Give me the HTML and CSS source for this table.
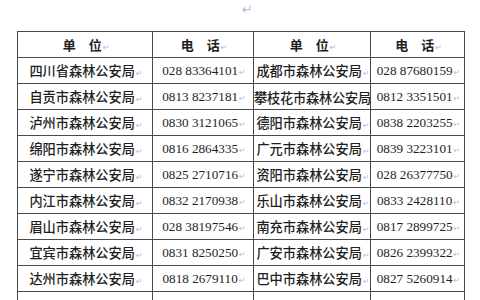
FILE: index.html
```html
<!DOCTYPE html>
<html lang="zh">
<head>
<meta charset="utf-8">
<link rel="stylesheet" href="styles.css">
</head>
<body>
<div class="page">
  <div class="para-mark">↵</div>
  <table class="contacts">
    <colgroup>
      <col class="c1"><col class="c2"><col class="c3"><col class="c4">
    </colgroup>
    <thead>
      <tr>
        <th>单　位<span class="rm">↵</span></th>
        <th>电　话<span class="rm">↵</span></th>
        <th>单　位<span class="rm">↵</span></th>
        <th>电　话<span class="rm">↵</span></th>
      </tr>
    </thead>
    <tbody>
      <tr><td class="name">四川省森林公安局<span class="rm">↵</span></td><td class="tel">028 83364101<span class="rm">↵</span></td><td class="name">成都市森林公安局<span class="rm">↵</span></td><td class="tel">028 87680159<span class="rm">↵</span></td></tr>
      <tr><td class="name">自贡市森林公安局<span class="rm">↵</span></td><td class="tel">0813 8237181<span class="rm">↵</span></td><td class="name tight">攀枝花市森林公安局</td><td class="tel">0812 3351501<span class="rm">↵</span></td></tr>
      <tr><td class="name">泸州市森林公安局<span class="rm">↵</span></td><td class="tel">0830 3121065<span class="rm">↵</span></td><td class="name">德阳市森林公安局<span class="rm">↵</span></td><td class="tel">0838 2203255<span class="rm">↵</span></td></tr>
      <tr><td class="name">绵阳市森林公安局<span class="rm">↵</span></td><td class="tel">0816 2864335<span class="rm">↵</span></td><td class="name">广元市森林公安局<span class="rm">↵</span></td><td class="tel">0839 3223101<span class="rm">↵</span></td></tr>
      <tr><td class="name">遂宁市森林公安局<span class="rm">↵</span></td><td class="tel">0825 2710716<span class="rm">↵</span></td><td class="name">资阳市森林公安局<span class="rm">↵</span></td><td class="tel">028 26377750<span class="rm">↵</span></td></tr>
      <tr><td class="name">内江市森林公安局<span class="rm">↵</span></td><td class="tel">0832 2170938<span class="rm">↵</span></td><td class="name">乐山市森林公安局<span class="rm">↵</span></td><td class="tel">0833 2428110<span class="rm">↵</span></td></tr>
      <tr><td class="name">眉山市森林公安局<span class="rm">↵</span></td><td class="tel">028 38197546<span class="rm">↵</span></td><td class="name">南充市森林公安局<span class="rm">↵</span></td><td class="tel">0817 2899725<span class="rm">↵</span></td></tr>
      <tr><td class="name">宜宾市森林公安局<span class="rm">↵</span></td><td class="tel">0831 8250250<span class="rm">↵</span></td><td class="name">广安市森林公安局<span class="rm">↵</span></td><td class="tel">0826 2399322<span class="rm">↵</span></td></tr>
      <tr><td class="name">达州市森林公安局<span class="rm">↵</span></td><td class="tel">0818 2679110<span class="rm">↵</span></td><td class="name">巴中市森林公安局<span class="rm">↵</span></td><td class="tel">0827 5260914<span class="rm">↵</span></td></tr>
      <tr><td class="name"></td><td class="tel"></td><td class="name"></td><td class="tel"></td></tr>
    </tbody>
  </table>
</div>
</body>
</html>
```

FILE: styles.css
```css
html, body {
  margin: 0;
  padding: 0;
  background: #ffffff;
}
.page {
  width: 480px;
  height: 300px;
  overflow: hidden;
  padding-top: 2px;
  box-sizing: border-box;
}
.para-mark {
  height: 29px;
  padding-left: 242px;
  font-family: "DejaVu Sans", sans-serif;
  font-size: 13px;
  line-height: 16px;
  color: #a9bdd9;
}
.contacts {
  margin-left: 17px;
  width: 447px;
  table-layout: fixed;
  border-collapse: collapse;
}
.c1 { width: 135px; }
.c2 { width: 101px; }
.c3 { width: 117px; }
.c4 { width: 94px; }
.contacts tr {
  height: 26px;
}
.contacts th,
.contacts td {
  border: 1px solid #4a4a4a;
  padding: 3px 0 0 2px;
  line-height: 16px;
  text-align: center;
  vertical-align: middle;
  white-space: nowrap;
  overflow: hidden;
  color: #1e1e1e;
}
.contacts th {
  font-family: "Noto Sans CJK SC", sans-serif;
  font-weight: 700;
  font-size: 13px;
}
.name {
  font-family: "Noto Sans CJK SC", sans-serif;
  font-weight: 500;
  font-size: 13.2px;
}
.contacts td.tight {
  letter-spacing: -0.2px;
  padding-left: 0;
}
.tel {
  font-family: "Liberation Serif", serif;
  font-size: 13.2px;
}
.rm {
  font-family: "DejaVu Sans", sans-serif;
  font-weight: 400;
  font-size: 8px;
  color: #a9bdd9;
  margin-left: 1px;
}
```
